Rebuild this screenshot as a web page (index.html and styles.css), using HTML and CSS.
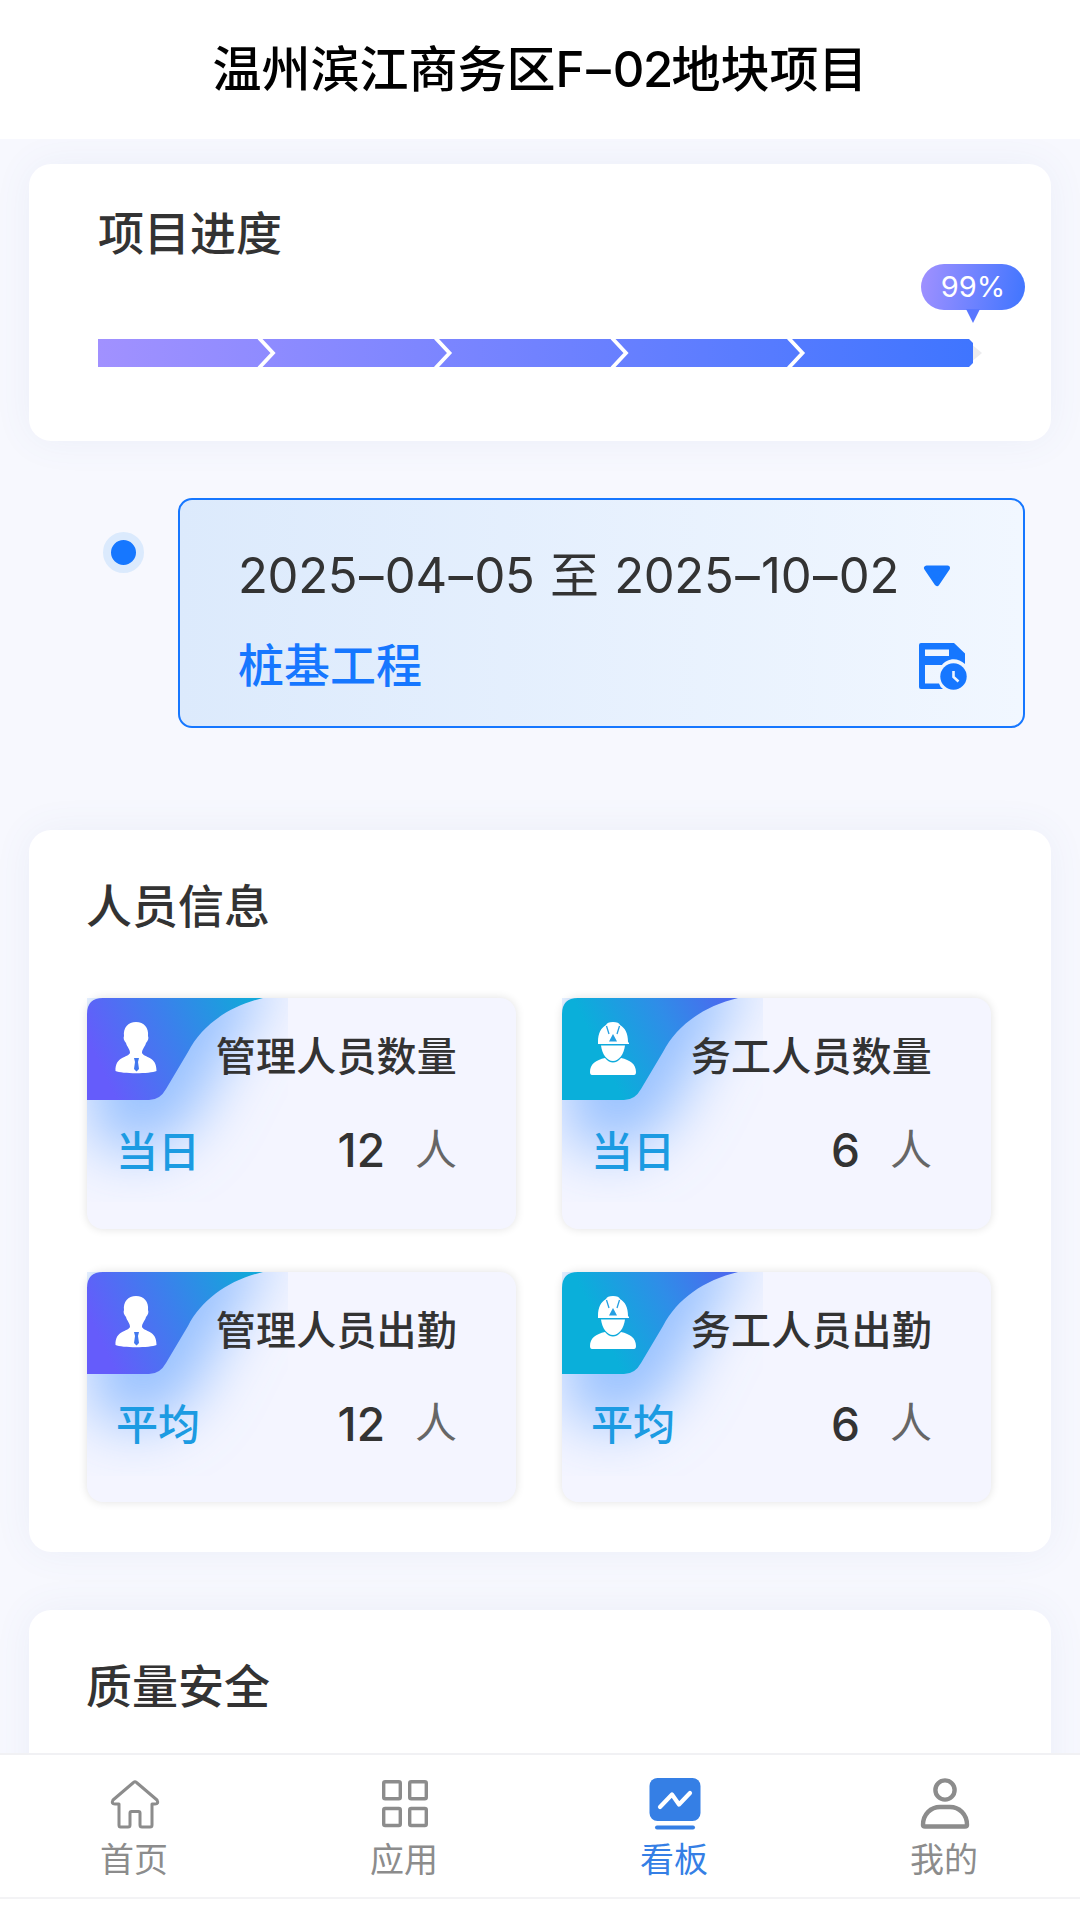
FILE: index.html
```html
<!DOCTYPE html>
<html lang="zh-CN">
<head>
<meta charset="utf-8">
<title>温州滨江商务区F–02地块项目</title>
<link rel="stylesheet" href="styles.css">
</head>
<body>
<svg class="defs" width="0" height="0" aria-hidden="true">
  <defs>
    <linearGradient id="managerFill" gradientUnits="userSpaceOnUse" x1="14" y1="70" x2="160" y2="0">
      <stop offset="0" stop-color="#655cfb"/><stop offset=".5" stop-color="#3b80ec"/><stop offset="1" stop-color="#12a7da"/>
    </linearGradient>
    <linearGradient id="workerFill" gradientUnits="userSpaceOnUse" x1="40" y1="60" x2="160" y2="0">
      <stop offset="0" stop-color="#0aafda"/><stop offset=".55" stop-color="#2f8de8"/><stop offset="1" stop-color="#4a6bee"/>
    </linearGradient>
    <filter id="glowBlur" filterUnits="userSpaceOnUse" x="-120" y="-120" width="460" height="460"><feGaussianBlur stdDeviation="30"/></filter>
    <symbol id="corner" viewBox="0 0 201 204">
      <path d="M20-30H190C165 20 142 42 128 78C110 114 95 152 50 152H20Q2 140 2 100Z" fill="#7db2ff" fill-opacity=".78" filter="url(#glowBlur)"/>
      <path d="M0 16Q0 0 16 0H176C142 8 115 27 101 54L79 91Q73 102 62 102H0Z"/>
    </symbol>
    <symbol id="manager" viewBox="0 0 42 52">
      <path fill="#fff" d="M21 0C29 0 34 6 33 14C34 16 33 19 31 21C30 25 27 27 27 31C29 36 42 34 41.500 49C35 52 7 52 .5 49C0 34 13 36 15 31C15 27 12 25 11 21C9 19 8 16 9 14C8 6 13 0 21 0Z"/>
      <path fill="#4278ee" d="M19 36H24L23 40L24 47L21.500 49.500L19 47L20 40Z"/>
    </symbol>
    <symbol id="worker" viewBox="0 0 46 53">
      <path fill="#fff" d="M8 20C8 11 11 6 16 3Q17 0 23 0T30 3C35 6 38 11 38 20L39 21V22H8ZM11 23.500H35C34 32 29 39 23 39S12 32 11 23.500ZM15 36C20 42 26 42 31 36C40 38 46 42 46 50Q46 53 44 53H2Q0 53 0 50C0 42 6 38 15 36Z"/>
      <path fill="none" stroke="#259fe2" stroke-width="1.300" d="M16.500 4L19 12M29.500 4L27 12"/>
      <path fill="#259fe2" d="M23 12L27 19.500H19Z"/>
    </symbol>
  </defs>
</svg>

<div class="app">
  <header class="header"><h1 class="header-title">温州滨江商务区F<span class="dash">–</span><span class="digits">02</span>地块项目</h1></header>

  <main class="content">
    <section class="card progress-card">
      <h2 class="card-title">项目进度</h2>
      <div class="progress">
        <svg class="progress-bar" viewBox="0 0 885 28" width="885" height="28">
          <defs><linearGradient id="bar"><stop offset="0" stop-color="#a191ff"/><stop offset=".5" stop-color="#7182ff"/><stop offset="1" stop-color="#3f75ff"/></linearGradient></defs>
          <path d="M872 4L884 14L872 24Z" fill="#ececee"/>
          <path d="M0 0H871L875 4V24L871 28H0Z" fill="url(#bar)"/>
          <g fill="none" stroke="#fff" stroke-width="3.800">
            <path d="M161-1L175 14L161 29"/><path d="M337.500-1L351.500 14L337.500 29"/><path d="M514-1L528 14L514 29"/><path d="M690.500-1L704.500 14L690.500 29"/>
          </g>
        </svg>
        <div class="progress-badge">99%</div>
      </div>
    </section>

    <section class="stage">
      <span class="stage-dot"></span>
      <div class="stage-box">
        <div class="stage-row">
          <span class="stage-date">2025<span class="date-dash">–</span>04<span class="date-dash">–</span>05 至 2025<span class="date-dash">–</span>10<span class="date-dash">–</span>02</span>
          <svg class="stage-arrow" width="28" height="22" viewBox="0 0 28 22"><path d="M3.500 3H24.500L14 18.500Z" fill="#1677ff" stroke="#1677ff" stroke-width="5" stroke-linejoin="round"/></svg>
        </div>
        <div class="stage-row">
          <span class="stage-name">桩基工程</span>
          <svg class="stage-icon" width="48" height="47" viewBox="0 0 48 47">
            <path fill="#1677ff" fill-rule="evenodd" d="M2 0H35L46 10.500V21C38 13 27 16 23 22H6V40.500H20Q21 44 24 46H2Q0 46 0 44V2Q0 0 2 0ZM6 6.500V13H30V6.500Z"/>
            <circle cx="34.500" cy="33.500" r="13.200" fill="#1677ff"/>
            <path d="M34.500 28V34L39.500 38.500" fill="none" stroke="#eff6ff" stroke-width="2.600"/>
          </svg>
        </div>
      </div>
    </section>

    <section class="card people-card">
      <h2 class="card-title">人员信息</h2>
      <div class="people-grid">
        <article class="stat">
          <svg class="stat-corner" fill="url(#managerFill)" width="201" height="204"><use href="#corner"/></svg>
          <svg class="stat-icon manager" width="42" height="52"><use href="#manager"/></svg>
          <h3 class="stat-title">管理人员数量</h3>
          <p class="stat-row"><span class="stat-label">当日</span><b class="stat-value">12</b><span class="stat-unit">人</span></p>
        </article>
        <article class="stat">
          <svg class="stat-corner" fill="url(#workerFill)" width="201" height="204"><use href="#corner"/></svg>
          <svg class="stat-icon worker" width="46" height="53"><use href="#worker"/></svg>
          <h3 class="stat-title">务工人员数量</h3>
          <p class="stat-row"><span class="stat-label">当日</span><b class="stat-value">6</b><span class="stat-unit">人</span></p>
        </article>
        <article class="stat">
          <svg class="stat-corner" fill="url(#managerFill)" width="201" height="204"><use href="#corner"/></svg>
          <svg class="stat-icon manager" width="42" height="52"><use href="#manager"/></svg>
          <h3 class="stat-title">管理人员出勤</h3>
          <p class="stat-row"><span class="stat-label">平均</span><b class="stat-value">12</b><span class="stat-unit">人</span></p>
        </article>
        <article class="stat">
          <svg class="stat-corner" fill="url(#workerFill)" width="201" height="204"><use href="#corner"/></svg>
          <svg class="stat-icon worker" width="46" height="53"><use href="#worker"/></svg>
          <h3 class="stat-title">务工人员出勤</h3>
          <p class="stat-row"><span class="stat-label">平均</span><b class="stat-value">6</b><span class="stat-unit">人</span></p>
        </article>
      </div>
    </section>

    <section class="card quality-card"><h2 class="card-title">质量安全</h2></section>
  </main>

  <nav class="tabbar">
    <a class="tab">
      <svg width="54" height="54" viewBox="0 0 54 54" fill="none" stroke="currentColor" stroke-width="3" stroke-linejoin="round"><path d="M25.500 5.500Q27 4 28.500 5.500L49 23Q51 27 47 27H44V48Q44 50 42 50H34Q32 50 32 48V36Q32 34.500 30.500 34.500H23.500Q22 34.500 22 36V48Q22 50 20 50H12.500Q11 50 11 48V27H7Q3 27 5 23Z"/></svg>
      <span>首页</span>
    </a>
    <a class="tab">
      <svg width="54" height="54" viewBox="0 0 54 54" fill="none" stroke="currentColor" stroke-width="3.400"><rect x="5.700" y="4.700" width="16.600" height="17" rx="1.500"/><rect x="31.700" y="4.700" width="16.600" height="17" rx="1.500"/><rect x="5.700" y="31.500" width="16.600" height="17" rx="1.500"/><rect x="31.700" y="31.500" width="16.600" height="17" rx="1.500"/></svg>
      <span>应用</span>
    </a>
    <a class="tab active">
      <svg width="54" height="54" viewBox="0 0 54 54"><rect x="1.500" y="1" width="51" height="43" rx="8" fill="currentColor"/><path d="M9 50.500H45" stroke="currentColor" stroke-width="4" stroke-linecap="round"/><path d="M12 30L24 17.500L31 27.500L42 16" fill="none" stroke="#fff" stroke-width="4.200" stroke-linecap="round" stroke-linejoin="round"/></svg>
      <span>看板</span>
    </a>
    <a class="tab">
      <svg width="54" height="54" viewBox="0 0 54 54" fill="none" stroke="currentColor" stroke-width="4.400"><circle cx="27" cy="13" r="9.600"/><path d="M5 48C5 37 13 30 22 30H32C41 30 49 37 49 48Q49 49.500 47 49.500H7Q5 49.500 5 48Z"/></svg>
      <span>我的</span>
    </a>
  </nav>
</div>
</body>
</html>
```
FILE: styles.css
```css
* { box-sizing: border-box; margin: 0; padding: 0; }
body {
  font-family: Inter, "Noto Sans CJK SC", sans-serif;
  color: #333;
  background: #f7f8fe;
}
.defs { position: absolute; }
.app { display: flex; flex-direction: column; height: 1920px; overflow: hidden; }

.header {
  flex: none;
  height: 139px;
  display: flex;
  align-items: center;
  justify-content: center;
  background: #fff;
}
.header-title { font-size: 49px; line-height: 70px; font-weight: 500; color: #000; white-space: nowrap; }
.dash { margin: 0 2px; }
.digits { letter-spacing: -1.500px; }

.content { flex: 1; min-height: 0; overflow: hidden; padding: 25px 29px 0; }
.card { background: #fff; border-radius: 22px; box-shadow: 0 0 38px rgba(80, 120, 170, .07); }
.card-title { font-size: 46px; line-height: 60px; font-weight: 500; }

.progress-card { height: 277px; padding: 39px 26px 0 69px; }
.progress { position: relative; padding-top: 76px; }
.progress-bar { display: block; }
.progress-badge {
  position: absolute;
  right: 0;
  top: 1px;
  width: 104px;
  height: 46px;
  border-radius: 23px;
  background: linear-gradient(100deg, #a191ff, #3f75ff);
  color: #fff;
  font-size: 29px;
  line-height: 46px;
  text-align: center;
}
.progress-badge::after {
  content: "";
  position: absolute;
  left: 45px;
  top: 45px;
  width: 14px;
  height: 14px;
  background: #5a77ff;
  clip-path: polygon(0 0, 100% 0, 50% 100%);
}

.stage { display: flex; margin-top: 57px; padding: 0 26px 0 74px; }
.stage-dot {
  flex: none;
  width: 41px;
  height: 41px;
  margin: 34px 34px 0 0;
  border: 8.500px solid #dbeafd;
  border-radius: 50%;
  background: #1677ff;
}
.stage-box {
  flex: 1;
  height: 230px;
  padding: 39px 56px 0 58px;
  border: 2.500px solid #1677ff;
  border-radius: 14px;
  background: linear-gradient(90deg, #dceafc, #f1f7ff);
}
.stage-row { display: flex; align-items: center; height: 74px; }
.stage-row + .stage-row { height: 108px; margin-top: -1px; }
.stage-row + .stage-row { justify-content: space-between; }
.stage-date { font-size: 49px; line-height: 74px; letter-spacing: -.3px; word-spacing: 2px; white-space: nowrap; }
.date-dash { margin: 0 1.700px; }
.stage-arrow { margin-left: 24px; }
.stage-name { font-size: 46px; line-height: 60px; font-weight: 500; color: #1677ff; position: relative; top: -1px; }

.people-card { height: 722px; margin-top: 102px; padding: 46px 60px 0 58px; }
.people-card .card-title, .quality-card .card-title { margin-left: -1px; }
.people-grid { display: grid; grid-template-columns: 429px 429px; column-gap: 46px; row-gap: 43px; margin-top: 62px; }
.stat {
  position: relative;
  height: 230.500px;
  padding: 31px 59px 0 31px;
  border-radius: 16px;
  background: #f4f5ff;
  box-shadow: 0 0 10px rgba(0, 0, 0, .12);
}
.stat-corner { position: absolute; left: 0; top: 0; overflow: hidden; }
.stat-icon { position: absolute; left: 28px; top: 24px; }
.stat-title { position: relative; font-size: 40px; line-height: 56px; letter-spacing: .2px; font-weight: 500; text-align: right; white-space: nowrap; }
.stat-row { position: relative; display: flex; align-items: center; height: 60px; margin-top: 35px; }
.stat-label { flex: 1; margin: -4px 0 0 -2px; font-size: 42px; color: #1c9be2; font-weight: 500; }
.stat-value { font-size: 46px; font-weight: 500; margin-right: 30px; }
.stat-unit { font-size: 42px; color: #666; margin-top: -8px; }

.quality-card { height: 300px; margin-top: 58px; padding: 46px 58px; }

.tabbar {
  flex: none;
  display: flex;
  height: 167px;
  background: #fff;
  border-top: 2px solid #f1f1f4;
}
.tab {
  flex: 1;
  height: 144px;
  padding-top: 22px;
  border-bottom: 2px solid #f3f3f5;
  display: flex;
  flex-direction: column;
  align-items: center;
  color: #8c8c8c;
  font-size: 34px;
  font-weight: 400;
}
.tab span { line-height: 50px; margin: 4px 2px 0 0; }
.active { color: #357fe5; }
```
